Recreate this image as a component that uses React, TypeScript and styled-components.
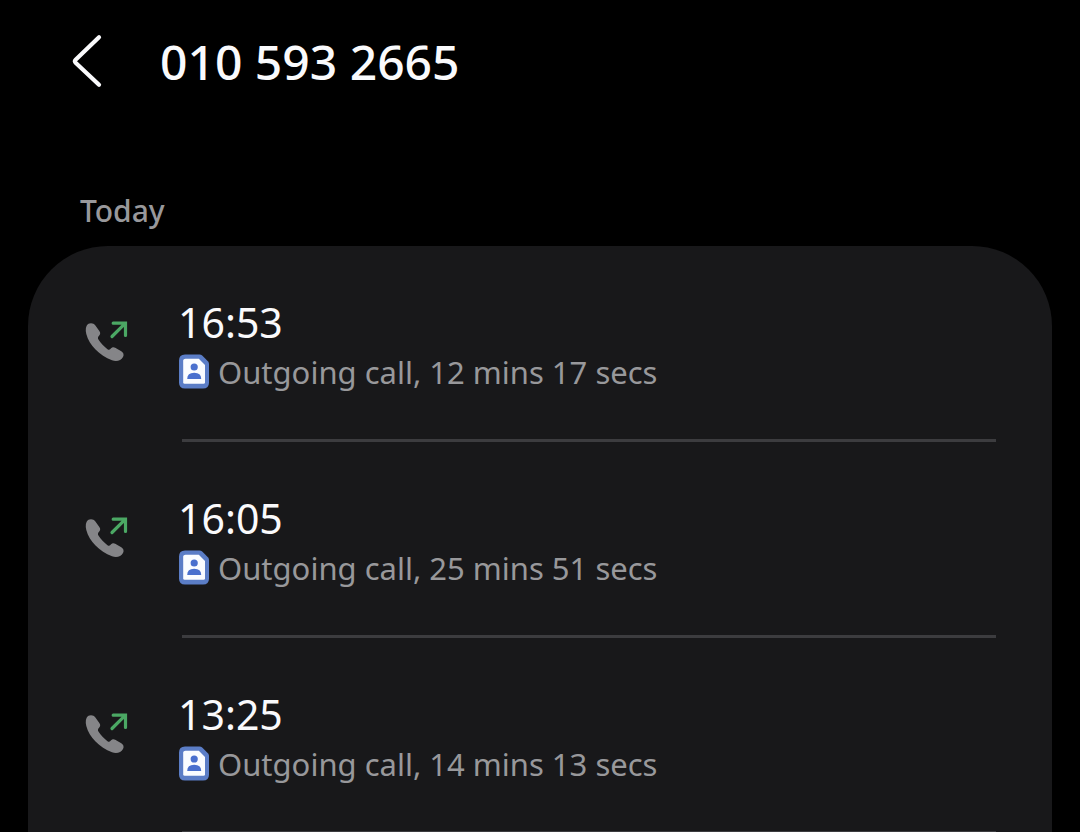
import React from 'react';
import styled, { createGlobalStyle } from 'styled-components';

const GlobalStyle = createGlobalStyle`
  * {
    box-sizing: border-box;
  }

  body {
    margin: 0;
    background: #000;
    color: #fafafc;
    font-family: "Noto Sans", "Open Sans", sans-serif;
  }
`;

const Screen = styled.div`
  display: flex;
  flex-direction: column;
  height: 100vh;
  overflow: hidden;
`;

const Header = styled.header`
  display: flex;
  align-items: center;
  gap: 40px;
  padding: 24px 56px 0;
`;

const BackButton = styled.button`
  display: flex;
  padding: 0;
  border: 0;
  background: none;
  color: #fafafc;
  cursor: pointer;
`;

const PhoneNumber = styled.h1`
  margin: 0;
  font-size: 48px;
  font-weight: 500;
  line-height: 76px;
`;

const DayLabel = styled.h2`
  margin: 88px 0 12px;
  padding: 0 80px;
  color: #98989b;
  font-size: 30px;
  font-weight: 500;
  line-height: 46px;
`;

const CallList = styled.ul`
  flex: 1;
  margin: 0 28px;
  padding: 0;
  border-radius: 80px 80px 0 0;
  background: #18181a;
  list-style: none;
  overflow-y: auto;
  scrollbar-width: none;
`;

const CallItem = styled.li`
  &::after {
    content: "";
    display: block;
    height: 3px;
    margin: 0 56px 0 154px;
    background: #3c3c3f;
  }
`;

const CallRow = styled.div`
  display: flex;
  align-items: center;
  gap: 48px;
  height: 193px;
  padding: 0 56px 4px 54px;
`;

const CallText = styled.div`
  display: flex;
  flex-direction: column;
  padding-top: 8px;
`;

const CallTime = styled.time`
  font-size: 41px;
  line-height: 54px;
`;

const CallDetail = styled.div`
  display: flex;
  align-items: center;
  gap: 8px;
  color: #98989b;
  font-size: 31px;
  line-height: 46px;
`;

const BackIcon = () => (
  <svg width="64" height="64" viewBox="0 0 64 64" fill="none" aria-hidden="true">
    <path d="M43 7.200L19.600 29.800Q18.200 31.200 19.600 32.700L43 54.800" stroke="currentColor" strokeWidth="4.200" strokeLinecap="round" strokeLinejoin="round" />
  </svg>
);

const OutgoingIcon = () => (
  <svg width="48" height="48" viewBox="0 0 48 48" fill="none" aria-hidden="true">
    <path
      d="M6 7C8.500 5.500 11.700 6 13.400 8.400L17.500 14.200C18.600 15.900 18.300 17.400 17 18.700C15.700 20 15.600 21.200 16.600 22.800C18.700 26.200 22 29.700 25.500 32.200C26.800 33.100 27.600 32.800 28.600 31.700C29.900 30.200 31.500 29.700 33.200 30.700L39.300 34.200C41.600 35.600 42.200 37.800 41 40C39 43.700 34.500 45 30 43.300C17.500 38.500 7.200 28.400 4.300 17C3.200 12.700 3.800 8.800 6 7Z"
      fill="#858588"
    />
    <path d="M30 19.500L42.700 6.800M31.200 6.200H43.500V18.500" stroke="#4ba864" strokeWidth="3.200" strokeLinecap="round" />
  </svg>
);

const SimIcon = () => (
  <svg width="32" height="36" viewBox="0 0 32 36" aria-hidden="true">
    <path d="M7 0.500H21.500Q23 0.500 24.200 1.600L29.900 7.200Q31 8.300 31 10V28.500Q31 34.500 25 34.500H7Q1 34.500 1 28.500V6.500Q1 0.500 7 0.500Z" fill="#5b7dc6" />
    <path d="M7.500 4.700H20.800L27 11V28.300Q27 29.800 25.500 29.800H6.700Q5.200 29.800 5.200 28.300V6.400Q5.200 4.700 7.500 4.700Z" fill="#fafcff" />
    <circle cx="16.200" cy="13" r="3.600" fill="#4a70ce" />
    <path d="M9.200 25Q9.200 18.800 16.200 18.800Q23.200 18.800 23.200 25Z" fill="#4a70ce" />
  </svg>
);

interface Call {
  time: string;
  duration: string;
}

const calls: Call[] = [
  { time: '16:53', duration: '12 mins 17 secs' },
  { time: '16:05', duration: '25 mins 51 secs' },
  { time: '13:25', duration: '14 mins 13 secs' }
];

const App = () => {
  return (
    <>
      <GlobalStyle />
      <Screen>
        <Header>
          <BackButton type="button" aria-label="Back">
            <BackIcon />
          </BackButton>
          <PhoneNumber>010 593 2665</PhoneNumber>
        </Header>
        <DayLabel>Today</DayLabel>
        <CallList>
          {calls.map(call => (
            <CallItem key={call.time}>
              <CallRow>
                <OutgoingIcon />
                <CallText>
                  <CallTime>{call.time}</CallTime>
                  <CallDetail>
                    <SimIcon />
                    <span>Outgoing call, {call.duration}</span>
                  </CallDetail>
                </CallText>
              </CallRow>
            </CallItem>
          ))}
        </CallList>
      </Screen>
    </>
  );
}

export default App;
